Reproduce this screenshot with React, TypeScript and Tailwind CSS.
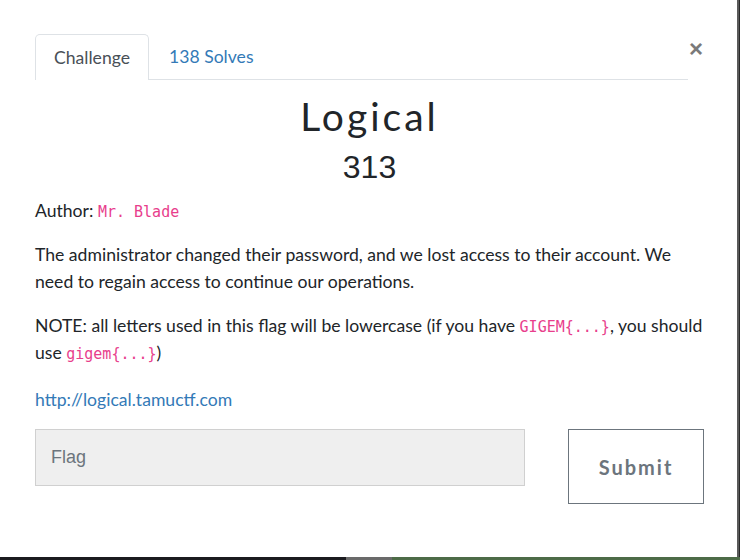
import React from "react";

export default function App() {
  const code = "font-['DejaVu_Sans_Mono',monospace] text-[#e83e8c] text-[15px] leading-none";
  return (
    <div className="w-[740px] h-[560px] bg-[#1e1e1e] flex flex-col overflow-hidden font-['Lato',sans-serif]">
      <div className="flex h-[557px]">
        <div className="w-[737px] h-full bg-white pl-[35px] pt-[34px] pr-[33px] text-[#212529]">
          <div className="flex items-start">
            <div className="flex w-[653px] shrink-0 border-b border-[#dee2e6]">
              <div className="h-[46px] px-[18px] flex items-center border border-b-0 border-[#dee2e6] rounded-t-[5px] bg-white text-[#495057] text-[17.6px] -mb-px pt-[2px]">
                Challenge
              </div>
              <div className="h-[45px] px-[20px] flex items-center text-[#337ab7] text-[17.6px] pt-[2px]">
                138 Solves
              </div>
            </div>
            <div className="ml-[1px] mt-[3px] text-[#7a7a7a] text-[24px] leading-none font-['Liberation_Sans',sans-serif] font-bold">
              ×
            </div>
          </div>
          <div>
            <div className="text-center text-[39px] tracking-[3px] leading-none mt-[17px] font-['Lato',sans-serif]">
              Logical
            </div>
            <div className="text-center text-[32px] leading-none mt-[15px] font-['Liberation_Sans',sans-serif]">
              313
            </div>
            <div className="text-[17.6px] leading-[27px] mt-[14px]">
              Author: <span className={code}>Mr. Blade</span>
            </div>
            <p className="text-[17.6px] leading-[27px] mt-[17px]">
              The administrator changed their password, and we lost access to their account. We need to regain access to continue our operations.
            </p>
            <p className="text-[17.6px] leading-[27px] mt-[17px]">
              NOTE: all letters used in this flag will be lowercase (if you have <span className={code}>GIGEM{"{...}"}</span>, you should use <span className={code}>gigem{"{...}"}</span>)
            </p>
            <p className="text-[17.6px] leading-[27px] mt-[20px] text-[#337ab7]">http://logical.tamuctf.com</p>
            <div className="flex mt-[16px] items-start">
              <div className="w-[490px] shrink-0 h-[57px] bg-[#efefef] border border-[#d0d0d0] flex items-center pl-[15px] text-[18px] text-[#6c757d] font-['Liberation_Sans',sans-serif]">
                Flag
              </div>
              <div className="ml-[43px] shrink-0 w-[136px] h-[75px] border border-[#6c757d] flex items-center justify-center text-[#6c757d] text-[20px] font-bold tracking-[2px]">
                Submit
              </div>
            </div>
          </div>
        </div>
        <div className="w-[2px] bg-[#5a5a5a]" />
        <div className="w-[1px] bg-[#2a2a2a]" />
      </div>
      <div className="flex h-[3px]">
        <div className="w-[346px] bg-[#1b1b1f]" />
        <div className="w-[46px] bg-[#6a6a6a]" />
        <div className="flex-1 bg-[#4d6b47]" />
      </div>
    </div>
  );
}
